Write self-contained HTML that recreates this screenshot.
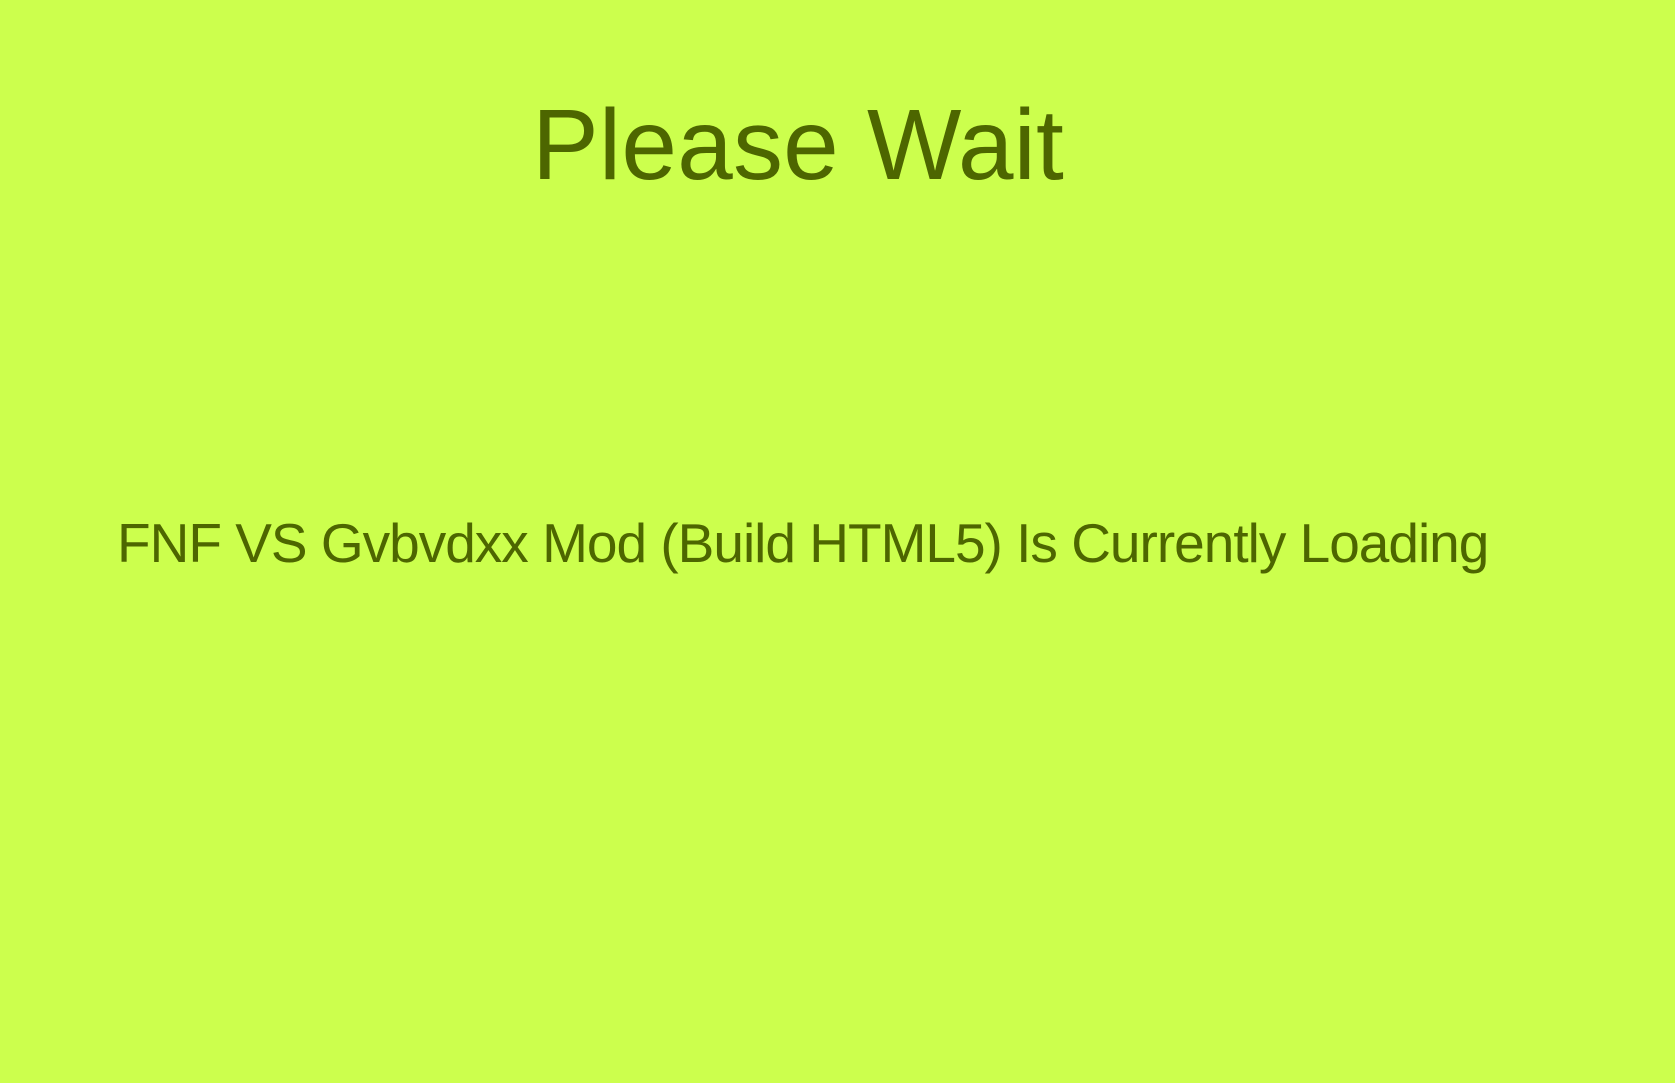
<!DOCTYPE html>
<html><head><style>
html,body{margin:0;padding:0;width:1675px;height:1083px;background:#ccff4d;overflow:hidden;font-family:"Liberation Sans",Arial,sans-serif;color:#4d6600}
.a{position:absolute;line-height:1;white-space:nowrap}
</style></head><body>
<div class="a" style="left:532px;top:95px;font-size:100px;letter-spacing:0.2px">Please Wait</div>
<div class="a" style="left:117px;top:516px;font-size:55px;letter-spacing:-1.0px">FNF VS Gvbvdxx Mod (Build HTML5) Is Currently Loading</div>
</body></html>
